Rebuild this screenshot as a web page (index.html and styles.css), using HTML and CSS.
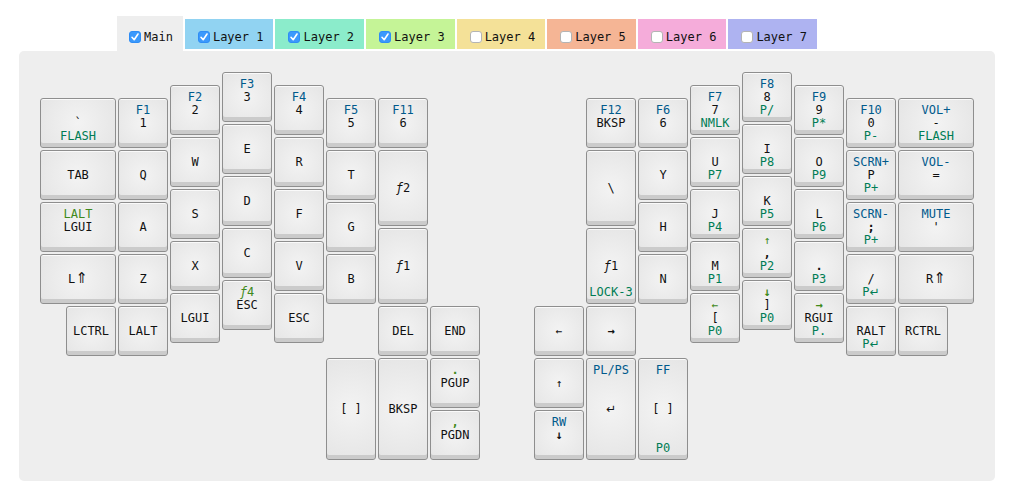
FILE: index.html
```html
<!DOCTYPE html>
<html lang="en">
<head>
<meta charset="utf-8">
<title>Keyboard layout</title>
<link rel="stylesheet" href="styles.css">
</head>
<body>
<nav class="tabs" aria-label="Layers">
  <label class="tab tab-main"><input type="checkbox" checked><span>Main</span></label>
  <label class="tab tab-1"><input type="checkbox" checked><span>Layer 1</span></label>
  <label class="tab tab-2"><input type="checkbox" checked><span>Layer 2</span></label>
  <label class="tab tab-3"><input type="checkbox" checked><span>Layer 3</span></label>
  <label class="tab tab-4"><input type="checkbox"><span>Layer 4</span></label>
  <label class="tab tab-5"><input type="checkbox"><span>Layer 5</span></label>
  <label class="tab tab-6"><input type="checkbox"><span>Layer 6</span></label>
  <label class="tab tab-7"><input type="checkbox"><span>Layer 7</span></label>
</nav>
<main class="keyboard">
  <div class="col drop-2">
    <button class="key"><span class="main">&#96;</span><span class="l2">FLASH</span></button>
    <button class="key"><span class="main">TAB</span></button>
    <button class="key"><span class="l3">LALT</span><span class="main">LGUI</span></button>
    <button class="key"><span class="main">L<span class="shift">⇑</span></span></button>
    <button class="key inner-right"><span class="main">LCTRL</span></button>
  </div>
  <div class="col drop-2">
    <button class="key"><span class="l1">F1</span><span class="main">1</span></button>
    <button class="key"><span class="main">Q</span></button>
    <button class="key"><span class="main">A</span></button>
    <button class="key"><span class="main">Z</span></button>
    <button class="key"><span class="main">LALT</span></button>
  </div>
  <div class="col drop-1">
    <button class="key"><span class="l1">F2</span><span class="main">2</span></button>
    <button class="key"><span class="main">W</span></button>
    <button class="key"><span class="main">S</span></button>
    <button class="key"><span class="main">X</span></button>
    <button class="key"><span class="main">LGUI</span></button>
  </div>
  <div class="col">
    <button class="key"><span class="l1">F3</span><span class="main">3</span></button>
    <button class="key"><span class="main">E</span></button>
    <button class="key"><span class="main">D</span></button>
    <button class="key"><span class="main">C</span></button>
    <button class="key"><span class="l3"><i>ƒ</i>4</span><span class="main">ESC</span></button>
  </div>
  <div class="col drop-1">
    <button class="key"><span class="l1">F4</span><span class="main">4</span></button>
    <button class="key"><span class="main">R</span></button>
    <button class="key"><span class="main">F</span></button>
    <button class="key"><span class="main">V</span></button>
    <button class="key"><span class="main">ESC</span></button>
  </div>
  <div class="col drop-2">
    <button class="key"><span class="l1">F5</span><span class="main">5</span></button>
    <button class="key"><span class="main">T</span></button>
    <button class="key"><span class="main">G</span></button>
    <button class="key"><span class="main">B</span></button>
    <button class="key double after-gap"><span class="main">[ ]</span></button>
  </div>
  <div class="col drop-2">
    <button class="key"><span class="l1">F11</span><span class="main">6</span></button>
    <button class="key tall"><span class="main"><i>ƒ</i>2</span></button>
    <button class="key tall"><span class="main"><i>ƒ</i>1</span></button>
    <button class="key"><span class="main">DEL</span></button>
    <button class="key double"><span class="main">BKSP</span></button>
  </div>
  <div class="col thumb">
    <button class="key"><span class="main">END</span></button>
    <button class="key"><span class="l3 strong">.</span><span class="main">PGUP</span></button>
    <button class="key"><span class="l3 strong">,</span><span class="main">PGDN</span></button>
  </div>
  <div class="col thumb right-half">
    <button class="key"><span class="main thin">←</span></button>
    <button class="key"><span class="main thin">↑</span></button>
    <button class="key"><span class="l1">RW</span><span class="main strong">↓</span></button>
  </div>
  <div class="col drop-2">
    <button class="key"><span class="l1">F12</span><span class="main">BKSP</span></button>
    <button class="key tall"><span class="main">\</span></button>
    <button class="key tall"><span class="main"><i>ƒ</i>1</span><span class="l2">LOCK-3</span></button>
    <button class="key"><span class="main strong">→</span></button>
    <button class="key double"><span class="l1">PL/PS</span><span class="main enter">↵</span></button>
  </div>
  <div class="col drop-2">
    <button class="key"><span class="l1">F6</span><span class="main">6</span></button>
    <button class="key"><span class="main">Y</span></button>
    <button class="key"><span class="main">H</span></button>
    <button class="key"><span class="main">N</span></button>
    <button class="key double after-gap"><span class="l1">FF</span><span class="main">[ ]</span><span class="l2">P0</span></button>
  </div>
  <div class="col drop-1">
    <button class="key"><span class="l1">F7</span><span class="main">7</span><span class="l2">NMLK</span></button>
    <button class="key"><span class="main">U</span><span class="l2">P7</span></button>
    <button class="key"><span class="main">J</span><span class="l2">P4</span></button>
    <button class="key"><span class="main">M</span><span class="l2">P1</span></button>
    <button class="key"><span class="l3 thin">←</span><span class="main">[</span><span class="l2">P0</span></button>
  </div>
  <div class="col">
    <button class="key"><span class="l1">F8</span><span class="main">8</span><span class="l2">P/</span></button>
    <button class="key"><span class="main">I</span><span class="l2">P8</span></button>
    <button class="key"><span class="main">K</span><span class="l2">P5</span></button>
    <button class="key"><span class="l3 thin">↑</span><span class="main strong">,</span><span class="l2">P2</span></button>
    <button class="key"><span class="l3 strong">↓</span><span class="main">]</span><span class="l2">P0</span></button>
  </div>
  <div class="col drop-1">
    <button class="key"><span class="l1">F9</span><span class="main">9</span><span class="l2">P*</span></button>
    <button class="key"><span class="main">O</span><span class="l2">P9</span></button>
    <button class="key"><span class="main">L</span><span class="l2">P6</span></button>
    <button class="key"><span class="main strong">.</span><span class="l2">P3</span></button>
    <button class="key"><span class="l3 strong">→</span><span class="main">RGUI</span><span class="l2">P.</span></button>
  </div>
  <div class="col drop-2">
    <button class="key"><span class="l1">F10</span><span class="main">0</span><span class="l2">P-</span></button>
    <button class="key"><span class="l1">SCRN+</span><span class="main">P</span><span class="l2">P+</span></button>
    <button class="key"><span class="l1">SCRN-</span><span class="main strong">;</span><span class="l2">P+</span></button>
    <button class="key"><span class="main">/</span><span class="l2">P<span class="enter">↵</span></span></button>
    <button class="key"><span class="main">RALT</span><span class="l2">P<span class="enter">↵</span></span></button>
  </div>
  <div class="col drop-2">
    <button class="key"><span class="l1">VOL+</span><span class="main">-</span><span class="l2">FLASH</span></button>
    <button class="key"><span class="l1">VOL-</span><span class="main">=</span></button>
    <button class="key"><span class="l1">MUTE</span><span class="main">'</span></button>
    <button class="key"><span class="main">R<span class="shift">⇑</span></span></button>
    <button class="key inner-left"><span class="main">RCTRL</span></button>
  </div>
</main>
</body>
</html>
```

FILE: styles.css
```css
* {
  box-sizing: border-box;
}

body {
  margin: 0;
  padding: 16px 17px 13px 19px;
  background: #fff;
  color: #111;
  font: 12px/13px "DejaVu Sans Mono", monospace;
}

/* Layer tabs */
.tabs {
  display: flex;
  align-items: flex-start;
  gap: 2px;
  padding-left: 98px;
}

.tab {
  display: flex;
  align-items: center;
  gap: 3px;
  height: 30px;
  margin-top: 3px;
  padding: 6px 10px 0 13px;
  white-space: nowrap;
}

.tab-main {
  height: 35px;
  margin-top: 0;
  padding: 7px 10px 0 12px;
  background: #eee;
}

.tab-1 { background: #91d3f2; }
.tab-2 { background: #8beccb; }
.tab-3 { background: #c5f497; }
.tab-4 { background: #f4e198; }
.tab-5 { background: #f5b595; }
.tab-6 { background: #f5acda; }
.tab-7 { background: #aeb3f1; }

.tab input {
  appearance: none;
  width: 12px;
  height: 12px;
  margin: 0;
  border: 1px solid #b4b4b4;
  border-radius: 3px;
  background: #fff;
}

.tab input:checked {
  border-color: #2f8df5;
  background: #3b99fc url("data:image/svg+xml,%3Csvg xmlns='http://www.w3.org/2000/svg' viewBox='0 0 10 10'%3E%3Cpath d='M2 5.3 4.2 7.7 8 2' fill='none' stroke='white' stroke-width='1.6' stroke-linecap='round' stroke-linejoin='round'/%3E%3C/svg%3E") center / 10px 10px no-repeat;
}

/* Keyboard */
.keyboard {
  display: grid;
  grid-template-columns: 3fr repeat(7, 2fr) 2fr repeat(7, 2fr) 3fr;
  padding: 20px;
  border-radius: 5px;
  background: #eee;
}

.col {
  display: flex;
  flex-direction: column;
  min-width: 0;
}

.drop-1 { padding-top: 13px; }
.drop-2 { padding-top: 26px; }
.thumb { padding-top: 234px; }
.right-half { grid-column: 10; }

.key {
  display: grid;
  grid-template-rows: 13px 1fr 13px;
  align-items: center;
  justify-items: center;
  height: 50px;
  margin: 1px;
  padding: 5px 0 4px;
  border: 1px solid #8e8e8e;
  border-radius: 3px;
  background: radial-gradient(circle at center, #f3f3f3, #e5e5e5);
  box-shadow: inset 0 1px #fafafa, inset 0 -4px #cbcbcb;
  color: #111;
  font: inherit;
  white-space: nowrap;
}

.tall { height: 76px; }
.double { height: 102px; }
.after-gap { margin-top: 53px; }

.inner-right,
.inner-left {
  width: calc(100% * 2 / 3 - 2px);
}

.inner-right { align-self: flex-end; }

.l1,
.l3 {
  grid-row: 1;
}

.main { grid-row: 2; }
.l2 { grid-row: 3; }

.l1 { color: #005a8c; }
.l2 { color: #007d55; }
.l3 { color: #3f8a1c; }

/* Legend symbols */
.strong { font-weight: bold; }
.thin { font-size: 11px; }

.shift,
.enter {
  font-family: "DejaVu Sans", sans-serif;
  line-height: 1px;
}

.shift { font-size: 15px; }
.enter { font-size: 12px; }
```
